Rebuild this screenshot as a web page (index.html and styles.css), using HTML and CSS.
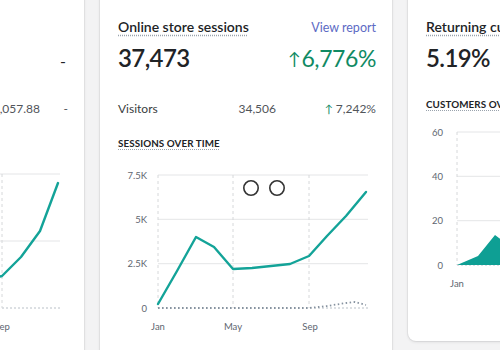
FILE: index.html
```html
<!DOCTYPE html>
<html>
<head>
<meta charset="utf-8">
<link rel="stylesheet" href="styles.css">
</head>
<body>
<div class="row">
  <section class="card">
    <div class="head"><span class="title">Total sales</span></div>
    <div class="big"><span class="value">$3,057.88</span><span class="none">-</span></div>
    <div class="sub sub-left"><span class="sub-label">Online store</span><span class="sub-num">$3,057.88</span><span class="sub-pct">-</span></div>
    <div class="section"><span class="section-label">SALES OVER TIME</span></div>
    <svg class="chart" width="292" height="224" viewBox="0 0 292 224">
      <g class="grid">
        <line x1="58" y1="14" x2="268" y2="14"/>
        <line x1="58" y1="81" x2="268" y2="81"/>
      </g>
      <line class="base" x1="58" y1="148" x2="268" y2="148"/>
      <g class="vgrid">
        <line x1="58" y1="14" x2="58" y2="148"/>
        <line x1="134" y1="14" x2="134" y2="148"/>
        <line x1="210" y1="14" x2="210" y2="148"/>
      </g>
      <g class="axis">
        <text x="47" y="17.5" text-anchor="end">$4K</text>
        <text x="47" y="84.5" text-anchor="end">$2K</text>
        <text x="47" y="151.5" text-anchor="end">$0</text>
        <text x="58" y="170" text-anchor="middle">Jan</text>
        <text x="134" y="170" text-anchor="middle">May</text>
        <text x="210" y="170" text-anchor="middle">Sep</text>
      </g>
      <polyline class="line" points="58,147 77,140 96,136 115,131 134,128 153,126 172,124 191,121 210,116 229,97 248,71 266,23"/>
    </svg>
  </section>

  <section class="card">
    <div class="head"><span class="title">Online store sessions</span><span class="link">View report</span></div>
    <div class="big"><span class="value">37,473</span><span class="pct"><span class="arrow">↑</span>6,776%</span></div>
    <div class="sub"><span class="sub-label">Visitors</span><span class="sub-num">34,506</span><span class="sub-pct"><span class="arrow-s">↑</span> 7,242%</span></div>
    <div class="section"><span class="section-label">SESSIONS OVER TIME</span></div>
    <svg class="chart" width="292" height="224" viewBox="0 0 292 224">
      <g class="grid">
        <line x1="58" y1="15" x2="268" y2="15"/>
        <line x1="58" y1="59.3" x2="268" y2="59.3"/>
        <line x1="58" y1="103.7" x2="268" y2="103.7"/>
      </g>
      <line class="base" x1="58" y1="148" x2="268" y2="148"/>
      <g class="vgrid">
        <line x1="58" y1="15" x2="58" y2="148"/>
        <line x1="133" y1="15" x2="133" y2="148"/>
        <line x1="209" y1="15" x2="209" y2="148"/>
      </g>
      <g class="axis">
        <text x="47" y="18.5" text-anchor="end">7.5K</text>
        <text x="47" y="62.5" text-anchor="end">5K</text>
        <text x="47" y="107" text-anchor="end">2.5K</text>
        <text x="47" y="151.5" text-anchor="end">0</text>
        <text x="58" y="170" text-anchor="middle">Jan</text>
        <text x="133" y="170" text-anchor="middle">May</text>
        <text x="210" y="170" text-anchor="middle">Sep</text>
      </g>
      <polyline class="compare" points="58,148 209,148 227,146 246,143 255,142 266,145"/>
      <polyline class="line" points="58,144 77,111 96,77 114,87 133,109 152,108 171,106 190,104 209,96 227,76 246,56 266,32"/>
      <circle class="ring" cx="151" cy="28" r="7.2"/>
      <circle class="ring" cx="177" cy="28" r="7.2"/>
    </svg>
  </section>

  <section class="card card-right">
    <div class="head"><span class="title">Returning customer rate</span><span class="link">View report</span></div>
    <div class="big"><span class="value">5.19%</span><span class="none">-</span></div>
    <div class="section"><span class="section-label">CUSTOMERS OVER TIME</span></div>
    <svg class="chart" width="292" height="224" viewBox="0 0 292 224">
      <g class="grid">
        <line x1="49" y1="15" x2="276" y2="15"/>
        <line x1="49" y1="59.3" x2="276" y2="59.3"/>
        <line x1="49" y1="103.7" x2="276" y2="103.7"/>
      </g>
      <line class="base" x1="49" y1="148" x2="276" y2="148"/>
      <g class="vgrid">
        <line x1="49" y1="15" x2="49" y2="148"/>
      </g>
      <polygon class="area" points="49,148 70,139 87,118 106,132 125,140 144,143 164,144 184,145 204,146 224,146 244,147 268,147 268,148"/>
      <g class="axis">
        <text x="35" y="18.5" text-anchor="end">60</text>
        <text x="35" y="62.5" text-anchor="end">40</text>
        <text x="35" y="107" text-anchor="end">20</text>
        <text x="35" y="151.5" text-anchor="end">0</text>
        <text x="49" y="170" text-anchor="middle">Jan</text>
      </g>
    </svg>
  </section>
</div>
</body>
</html>
```

FILE: styles.css
```css
html, body {
  margin: 0;
  padding: 0;
}
body {
  width: 500px;
  height: 350px;
  overflow: hidden;
  background: #f3f3f4;
  font-family: "Lato", "Open Sans", sans-serif;
  color: #212326;
}
.row {
  display: flex;
  align-items: flex-start;
  gap: 16px;
  margin-left: -208px;
  margin-top: -20px;
}
.card {
  flex: 0 0 292px;
  box-sizing: border-box;
  width: 292px;
  background: #fff;
  border-radius: 8px;
  box-shadow: 0 0 0 1px rgba(63, 63, 68, 0.06), 0 1px 3px rgba(63, 63, 68, 0.14);
  padding: 38px 16px 0 18px;
}
.head {
  display: flex;
  justify-content: space-between;
  align-items: baseline;
  height: 18px;
}
.title {
  font-size: 14px;
  font-weight: 600;
  white-space: nowrap;
  text-decoration: underline dotted #9aa3ad;
  text-underline-offset: 3px;
}
.link {
  font-size: 12.5px;
  color: #5c6ac4;
  white-space: nowrap;
}
.big {
  display: flex;
  justify-content: space-between;
  align-items: baseline;
  margin-top: 5px;
  height: 34px;
  font-size: 24px;
  line-height: 34px;
}
.value {
  font-weight: 600;
  letter-spacing: -0.6px;
}
.pct {
  color: #108a63;
  font-size: 23px;
  letter-spacing: -0.4px;
}
.arrow {
  font-size: 17px;
  margin-right: 1px;
  position: relative;
  top: -2px;
}
.none {
  font-size: 16px;
  margin-right: 2px;
}
.sub {
  display: grid;
  grid-template-columns: 1fr 60px 100px;
  margin-top: 25px;
  height: 17px;
  line-height: 17px;
  font-size: 12px;
  color: #3a3d40;
}
.sub-num {
  text-align: right;
  color: #51555a;
}
.sub-pct {
  text-align: right;
  color: #51555a;
}
.arrow-s {
  color: #108a63;
  font-size: 11px;
}
.sub-left {
  grid-template-columns: 1fr 90px 28px;
}
.section {
  margin-top: 17px;
  height: 13px;
  line-height: 13px;
}
.section-label {
  font-size: 9.8px;
  font-weight: 700;
  letter-spacing: 0.1px;
  text-decoration: underline dotted #9aa3ad;
  text-underline-offset: 2px;
}
.card-right .section {
  margin-top: 20px;
}
.chart {
  display: block;
  margin-left: -18px;
  margin-top: 13px;
  overflow: visible;
}
.card-right .chart {
  margin-top: 9px;
}
.grid line {
  stroke: #e4e5e7;
  stroke-width: 1;
}
.base {
  stroke: #b9c0c7;
  stroke-width: 1;
  stroke-dasharray: 2 2;
}
.vgrid line {
  stroke: #d6d8da;
  stroke-width: 1;
  stroke-dasharray: 3 3;
}
.axis text {
  font-family: "Lato", "Open Sans", sans-serif;
  font-size: 9.5px;
  fill: #5e6670;
}
.line {
  fill: none;
  stroke: #13a398;
  stroke-width: 2.4;
  stroke-linejoin: round;
  stroke-linecap: round;
}
.compare {
  fill: none;
  stroke: #8793a0;
  stroke-width: 1.8;
  stroke-dasharray: 1.5 2.5;
}
.area {
  fill: #0e9f94;
}
.ring {
  fill: none;
  stroke: #333;
  stroke-width: 1.6;
}
```
